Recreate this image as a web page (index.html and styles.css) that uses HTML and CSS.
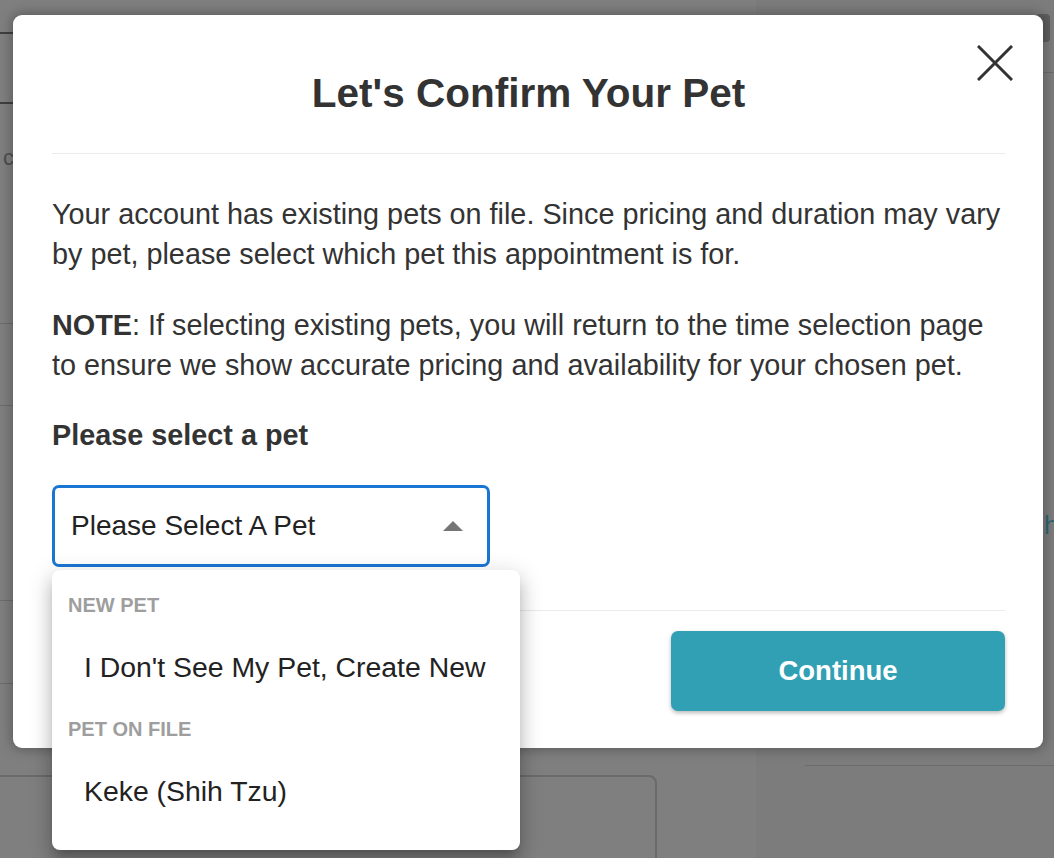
FILE: index.html
```html
<!DOCTYPE html>
<html lang="en">
<head>
<meta charset="utf-8">
<title>Let's Confirm Your Pet</title>
<link rel="stylesheet" href="styles.css">
</head>
<body>
<div class="backdrop" aria-hidden="true">
  <div class="bg-panel"></div>
  <div class="bg-line bg-l1"></div>
  <div class="bg-line bg-l2"></div>
  <div class="bg-line soft bg-l3"></div>
  <div class="bg-line soft bg-l4"></div>
  <div class="bg-line soft bg-l5"></div>
  <div class="bg-line soft bg-l6"></div>
  <div class="bg-line soft bg-r1"></div>
  <div class="bg-line soft bg-r2"></div>
  <div class="bg-chip"></div>
  <span class="bg-glyph bg-c">c</span>
  <span class="bg-glyph bg-h">h</span>
  <div class="bg-box"></div>
</div>

<div class="modal" role="dialog" aria-labelledby="modal-title">
  <button class="close-btn" type="button" aria-label="Close">
    <svg width="36" height="36" viewBox="0 0 36 36"><path d="M1 1 L35 35 M35 1 L1 35" stroke="#333" stroke-width="3" fill="none"/></svg>
  </button>
  <header class="modal-header">
    <h1 id="modal-title" class="modal-title">Let's Confirm Your Pet</h1>
  </header>
  <div class="modal-body">
    <p class="copy">Your account has existing pets on file. Since pricing and duration may vary by pet, please select which pet this appointment is for.</p>
    <p class="copy copy-note"><strong>NOTE</strong>: If selecting existing pets, you will return to the time selection page to ensure we show accurate pricing and availability for your chosen pet.</p>
    <h2 class="field-label">Please select a pet</h2>
    <div class="select-wrap">
      <div class="select">
        <span class="select-value">Please Select A Pet</span>
        <svg class="select-arrow" width="20" height="10" viewBox="0 0 20 10"><path d="M0 10 L10 0 L20 10 Z" fill="#757575"/></svg>
      </div>
      <ul class="menu" role="listbox">
        <li class="menu-group">New Pet</li>
        <li class="menu-item" role="option">I Don't See My Pet, Create New</li>
        <li class="menu-group">Pet On File</li>
        <li class="menu-item" role="option">Keke (Shih Tzu)</li>
      </ul>
    </div>
  </div>
  <footer class="modal-footer">
    <button class="continue-btn" type="button">Continue</button>
  </footer>
</div>
</body>
</html>
```
FILE: styles.css
```css
html, body {
  margin: 0;
  padding: 0;
}

body {
  width: 1054px;
  height: 858px;
  overflow: hidden;
  background: #7f7f7f;
  font-family: "Liberation Sans", Arial, Helvetica, sans-serif;
  color: #333333;
  position: relative;
}

/* ---------- page behind the dimmed overlay ---------- */
.backdrop {
  position: absolute;
  inset: 0;
  z-index: 0;
}

.bg-panel {
  position: absolute;
  left: 756px;
  top: 0;
  right: 0;
  bottom: 0;
  background: #7c7c7c;
}

.bg-line {
  position: absolute;
  height: 2px;
  background: #3f3f3f;
}

.bg-line.soft {
  height: 1px;
  background: #6c6c6c;
}

.bg-l1 { left: 0; top: 32px; width: 20px; }
.bg-l2 { left: 0; top: 102px; width: 20px; }
.bg-l3 { left: 0; top: 323px; width: 20px; }
.bg-l4 { left: 0; top: 405px; width: 20px; }
.bg-l5 { left: 0; top: 600px; width: 20px; }
.bg-l6 { left: 0; top: 683px; width: 20px; }
.bg-r1 { left: 1030px; top: 72px; width: 24px; }
.bg-r2 { left: 805px; top: 765px; width: 249px; height: 2px; background: #6a6a6a; }

.bg-chip {
  position: absolute;
  left: 1036px;
  top: 14px;
  width: 14px;
  height: 28px;
  border-radius: 4px;
  background: #5e5e5e;
}

.bg-glyph {
  position: absolute;
  font-size: 22px;
  color: #4e4e4e;
}

.bg-c { left: 3px; top: 145px; }
.bg-h { left: 1044px; top: 510px; font-size: 26px; color: #2d6772; }

.bg-box {
  position: absolute;
  left: -10px;
  top: 775px;
  width: 663px;
  height: 120px;
  border: 2px solid #6a6a6a;
  border-radius: 8px;
}

/* ---------- modal ---------- */
.modal {
  position: relative;
  z-index: 1;
  box-sizing: border-box;
  width: 1030px;
  margin: 15px 0 0 13px;
  background: #ffffff;
  border-radius: 9px;
  box-shadow: 0 0 12px 2px rgba(0, 0, 0, 0.28);
}

.close-btn {
  position: absolute;
  top: 30px;
  right: 30px;
  width: 36px;
  height: 36px;
  padding: 0;
  border: 0;
  background: transparent;
  cursor: pointer;
}

.close-btn svg {
  display: block;
}

.modal-header {
  margin: 0 38px 0 39px;
  padding: 54px 0 36px;
  border-bottom: 1px solid #ebebeb;
}

.modal-title {
  margin: 0;
  text-align: center;
  font-size: 40.5px;
  line-height: 48px;
  font-weight: 700;
  color: #333333;
}

.modal-body {
  padding: 40px 38px 43px 39px;
}

.copy {
  margin: 0 -3px 31px 0;
  font-size: 28.8px;
  line-height: 40px;
  color: #333333;
}

.copy-note {
  margin-bottom: 30px;
}

.copy strong {
  font-weight: 700;
}

.field-label {
  margin: 0 0 30px;
  font-size: 28.8px;
  line-height: 40px;
  font-weight: 700;
  color: #333333;
}

.select-wrap {
  position: relative;
  width: 438px;
}

.select {
  box-sizing: border-box;
  height: 82px;
  display: flex;
  align-items: center;
  justify-content: space-between;
  padding: 0 24px 0 16px;
  border: 3px solid #1976d2;
  border-radius: 7px;
  background: #ffffff;
}

.select-value {
  font-size: 28px;
  color: #222222;
}

.select-arrow {
  display: block;
}

/* dropdown menu overlays the content below the select */
.menu {
  position: absolute;
  top: calc(100% + 3px);
  left: 0;
  z-index: 2;
  box-sizing: border-box;
  width: 468px;
  margin: 0;
  padding: 11px 0 21px;
  list-style: none;
  background: #ffffff;
  border-radius: 8px;
  box-shadow:
    0 8px 8px -5px rgba(0, 0, 0, 0.2),
    0 13px 16px 2px rgba(0, 0, 0, 0.14),
    0 5px 22px 4px rgba(0, 0, 0, 0.12);
}

.menu-group {
  height: 48px;
  line-height: 48px;
  padding-left: 16px;
  font-size: 20px;
  font-weight: 700;
  text-transform: uppercase;
  color: #9e9e9e;
}

.menu-item {
  height: 76px;
  line-height: 76px;
  padding-left: 32px;
  font-size: 28.4px;
  color: #222222;
  white-space: nowrap;
}

.modal-footer {
  display: flex;
  justify-content: flex-end;
  margin: 0 38px 0 39px;
  padding: 20px 0 37px;
  border-top: 1px solid #ebebeb;
}

.continue-btn {
  width: 334px;
  height: 80px;
  padding: 0;
  border: 0;
  border-radius: 7px;
  background: #31a0b5;
  color: #ffffff;
  font-family: "Liberation Sans", Arial, Helvetica, sans-serif;
  font-size: 27.5px;
  font-weight: 700;
  box-shadow: 0 2px 4px rgba(0, 0, 0, 0.28);
  cursor: pointer;
}
```
